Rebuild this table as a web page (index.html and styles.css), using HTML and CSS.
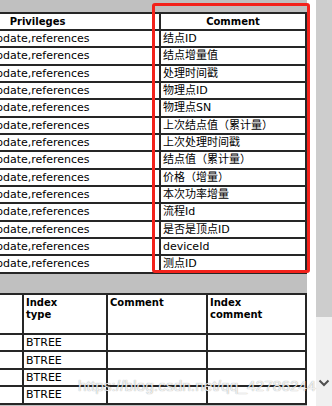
FILE: index.html
```html
<!DOCTYPE html>
<html lang="zh-CN">
<head>
    <meta charset="UTF-8">
    <meta name="viewport" content="width=device-width, initial-scale=1.0">
    <title>Table structure</title>
    <link rel="stylesheet" href="styles.css">
</head>
<body>
<div class="window">
    <div class="pane">
        <div class="sheet">
            <!-- columns of the table -->
            <table class="grid fields">
                <tr>
                    <th class="col-priv">Privileges</th>
                    <th class="col-note">Comment</th>
                </tr>
                <tr><td>select,insert,update,references</td><td>结点ID</td></tr>
                <tr><td>select,insert,update,references</td><td>结点增量值</td></tr>
                <tr><td>select,insert,update,references</td><td>处理时间戳</td></tr>
                <tr><td>select,insert,update,references</td><td>物理点ID</td></tr>
                <tr><td>select,insert,update,references</td><td>物理点SN</td></tr>
                <tr><td>select,insert,update,references</td><td>上次结点值（累计量）</td></tr>
                <tr><td>select,insert,update,references</td><td>上次处理时间戳</td></tr>
                <tr><td>select,insert,update,references</td><td>结点值（累计量）</td></tr>
                <tr><td>select,insert,update,references</td><td>价格（增量）</td></tr>
                <tr><td>select,insert,update,references</td><td>本次功率增量</td></tr>
                <tr><td>select,insert,update,references</td><td>流程Id</td></tr>
                <tr><td>select,insert,update,references</td><td>是否是顶点ID</td></tr>
                <tr><td>select,insert,update,references</td><td>deviceId</td></tr>
                <tr><td>select,insert,update,references</td><td>测点ID</td></tr>
            </table>

            <!-- indexes of the table -->
            <table class="grid indexes">
                <tr>
                    <th class="col-name">Column</th>
                    <th class="col-type">Index<br>type</th>
                    <th class="col-comment">Comment</th>
                    <th class="col-icomment">Index<br>comment</th>
                </tr>
                <tr><td>id</td><td>BTREE</td><td></td><td></td></tr>
                <tr><td>id</td><td>BTREE</td><td></td><td></td></tr>
                <tr><td>id</td><td>BTREE</td><td></td><td></td></tr>
                <tr><td>id</td><td>BTREE</td><td></td><td></td></tr>
            </table>
        </div>

        <div class="callout"></div>
        <div class="watermark">https://blog.csdn.net/qq_42786244</div>
    </div>

    <div class="scrollbar">
        <div class="thumb"></div>
        <svg class="arrow-down" width="12" height="8" viewBox="0 0 12 8">
            <path d="M1.5 1.5 L6 6 L10.5 1.5" fill="none" stroke="#505050" stroke-width="2"/>
        </svg>
    </div>
</div>
</body>
</html>
```

FILE: styles.css
```css
* {
    box-sizing: border-box;
}

body {
    margin: 0;
    font-family: "DejaVu Sans", "Noto Sans CJK SC", sans-serif;
    font-size: 11px;
    color: #000;
    background: #fff;
}

.window {
    display: flex;
    width: 332px;
    height: 406px;
    overflow: hidden;
}

.pane {
    position: relative;
    flex: none;
    width: 316px;
}

.sheet {
    width: 307px;
    height: 406px;
    padding-top: 12px;
    background: #c0c0c0;
    overflow: hidden;
}

/* report tables */
.grid {
    table-layout: fixed;
    width: 393px;
    margin-left: -86px;
    border-collapse: separate;
    border-spacing: 0;
    border-top: 2px solid #262626;
    border-left: 2px solid #262626;
    background: #fff;
}

.grid th,
.grid td {
    padding: 0 2px;
    border-right: 2px solid #262626;
    border-bottom: 2px solid #262626;
    line-height: 13px;
    text-align: left;
    white-space: nowrap;
    overflow: hidden;
}

.grid th {
    font-size: 10px;
    font-weight: bold;
}

.grid td {
    height: 17.33px;
    vertical-align: middle;
}

.fields th {
    height: 17px;
    text-align: center;
    vertical-align: middle;
}

.col-priv { width: 245px; }
.col-note { width: 146px; }

.indexes {
    margin-top: 19.4px;
}

.indexes th {
    height: 40px;
    padding-top: 2px;
    line-height: 12.5px;
    vertical-align: top;
}

.indexes td {
    height: 17.4px;
}

.col-name { width: 108px; }
.col-type { width: 84px; }
.col-comment { width: 100px; }
.col-icomment { width: 99px; }

/* red frame drawn over the comment column */
.callout {
    position: absolute;
    left: 152px;
    top: 3px;
    width: 158px;
    height: 270px;
    border: 3px solid #f3221b;
    border-radius: 3px;
}

.watermark {
    position: absolute;
    left: 78px;
    top: 377px;
    font-family: "Liberation Sans", Arial, sans-serif;
    font-size: 15.5px;
    color: rgba(255, 255, 255, 0.85);
    text-shadow: 0 0 1px rgba(0, 0, 0, 0.45);
    white-space: nowrap;
}

.scrollbar {
    display: flex;
    flex-direction: column;
    align-items: center;
    width: 16px;
    flex: none;
    background: #f0f0f0;
}

.thumb {
    width: 16px;
    height: 317px;
    background: #cdcdcd;
}

.arrow-down {
    margin-top: 62px;
}
```
